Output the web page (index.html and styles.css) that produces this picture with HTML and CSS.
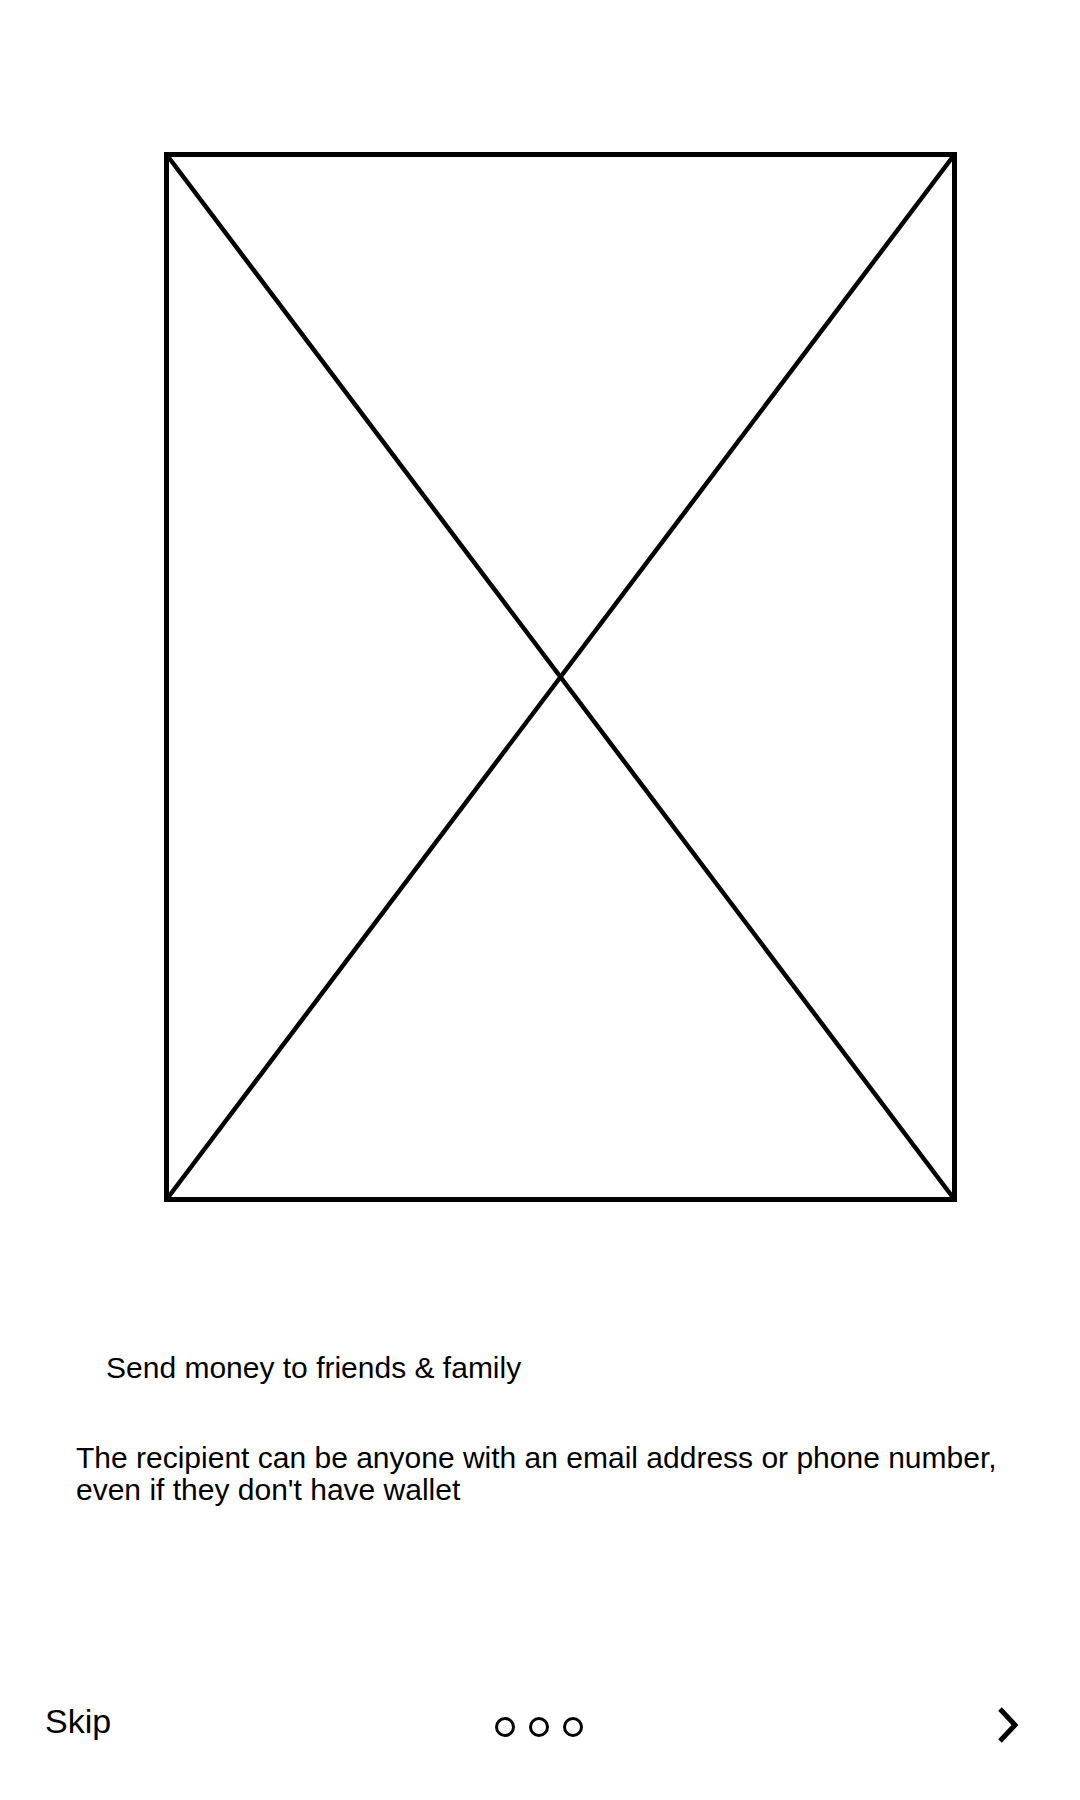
FILE: index.html
```html
<!DOCTYPE html>
<html lang="en">
<head>
    <meta charset="UTF-8">
    <meta name="viewport" content="width=device-width, initial-scale=1.0">
    <title>Wallet - Onboarding</title>
    <link rel="stylesheet" href="styles.css">
</head>
<body>
    <div class="screen">
        <div class="illustration">
            <!-- placeholder image -->
            <svg class="placeholder" width="793" height="1050" viewBox="0 0 793 1050">
                <rect x="2.5" y="2.5" width="788" height="1045" fill="none" stroke="#000" stroke-width="5"/>
                <line x1="2.5" y1="2.5" x2="790.5" y2="1047.5" stroke="#000" stroke-width="4.5"/>
                <line x1="790.5" y1="2.5" x2="2.5" y2="1047.5" stroke="#000" stroke-width="4.5"/>
            </svg>
        </div>

        <h2 class="title">Send money to friends &amp; family</h2>
        <p class="description">The recipient can be anyone with an email address or phone number, even if they don't have wallet</p>

        <div class="footer">
            <a href="#" class="skip">Skip</a>
            <div class="dots">
                <span class="dot"></span>
                <span class="dot"></span>
                <span class="dot"></span>
            </div>
            <a href="#" class="next">
                <svg width="24" height="38" viewBox="0 0 24 38">
                    <polyline points="4,3 19,19 4,35" fill="none" stroke="#000" stroke-width="5"/>
                </svg>
            </a>
        </div>
    </div>
</body>
</html>
```

FILE: styles.css
```css
/* Onboarding screen */
body {
    margin: 0;
    font-family: "Liberation Sans", Arial, sans-serif;
    color: #000;
    background-color: #fff;
}

.screen {
    display: flex;
    flex-direction: column;
    height: 1800px;
}

.illustration {
    padding: 152px 0 0 164px;
}

.placeholder {
    display: block;
}

.title {
    font-size: 30px;
    font-weight: normal;
    line-height: 34px;
    margin: 149px 0 0 106px;
}

.description {
    font-size: 30px;
    line-height: 32px;
    margin: 57px 0 0 76px;
    max-width: 950px;
}

.footer {
    display: grid;
    grid-template-columns: 1fr auto 1fr;
    align-items: end;
    margin-top: auto;
    padding: 0 45px 50px;
}

.skip {
    justify-self: start;
    margin-bottom: 9px;
    font-size: 34px;
    color: #000;
    text-decoration: none;
}

.dots {
    display: flex;
    gap: 14px;
    margin: 0 2px 13px 0;
}

.dot {
    width: 14px;
    height: 14px;
    border: 3px solid #000;
    border-radius: 50%;
}

.next {
    justify-self: end;
    margin: 0 15px 6px 0;
}

.next svg {
    display: block;
}
```
